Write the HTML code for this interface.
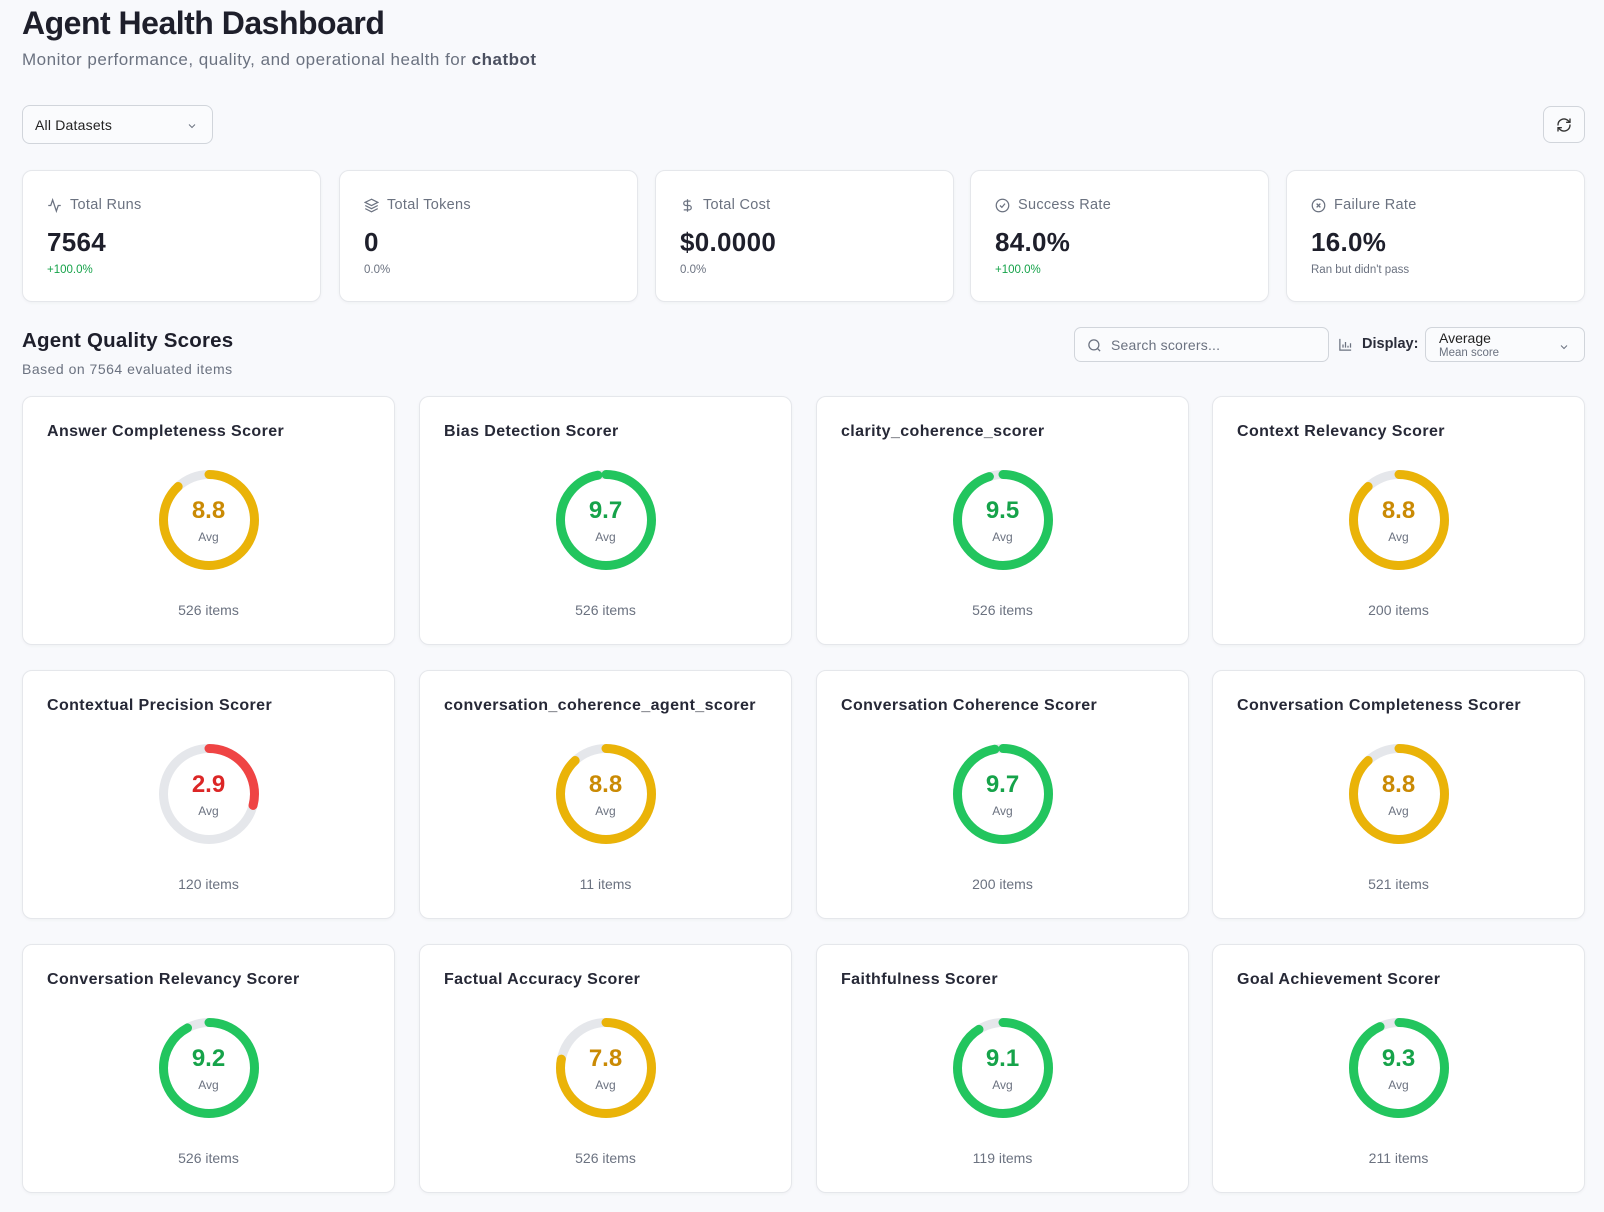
<!DOCTYPE html>
<html><head><meta charset="utf-8"><style>
*{box-sizing:border-box;margin:0;padding:0}
body{width:1604px;height:1212px;background:#f8f9fc;font-family:"Liberation Sans",sans-serif;color:#1f2130;position:relative;overflow:hidden}
.abs{position:absolute}
h1{position:absolute;left:22px;top:5px;font-size:32px;font-weight:700;letter-spacing:-0.5px;color:#1e1f2b}
.sub{position:absolute;left:22px;top:50px;font-size:17px;letter-spacing:0.5px;color:#6b7280}
.sub b{color:#4b5060;font-weight:600}
.dd{position:absolute;left:22px;top:105px;width:191px;height:39px;border:1px solid #d1d5db;border-radius:8px;background:#fafbfd;font-size:14px;padding:11px 12px;color:#222;letter-spacing:0.2px}
.dd svg{position:absolute;right:14px;top:14px}
.ref{position:absolute;left:1543px;top:106px;width:42px;height:37px;border:1px solid #d1d5db;border-radius:8px;background:#fafbfd}
.ref svg{position:absolute;left:12px;top:10px}
.stat{position:absolute;top:170px;width:299px;height:132px;background:#fff;border:1px solid #e5e7eb;border-radius:10px;box-shadow:0 1px 3px rgba(0,0,0,.04)}
.stat .l{position:absolute;left:24px;top:26px;font-size:14.5px;letter-spacing:0.3px;color:#6b7280;display:flex;align-items:center;gap:8px}
.stat .v{position:absolute;left:24px;top:56px;font-size:26px;font-weight:700;color:#1e1f2b;letter-spacing:0.3px}
.stat .s{position:absolute;left:24px;top:93px;font-size:11.5px;color:#6b7280}
.stat .g{color:#16a34a}
.st{position:absolute;left:22px;top:329px;font-size:20.5px;font-weight:700;color:#1e1f2b;letter-spacing:0.2px}
.st2{position:absolute;left:22px;top:361px;font-size:14px;color:#6b7280;letter-spacing:0.5px}
.search{position:absolute;left:1074px;top:327px;width:255px;height:35px;border:1px solid #d1d5db;border-radius:7px;background:#fafbfd;font-size:14px;color:#6b7280;padding:9px 0 0 36px;letter-spacing:0.2px}
.search svg{position:absolute;left:12px;top:10px}
.disp{position:absolute;left:1362px;top:336px;font-size:14.5px;font-weight:600;color:#2b2d3a}
.sel{position:absolute;left:1425px;top:327px;width:160px;height:35px;border:1px solid #d1d5db;border-radius:7px;background:#fafbfd;padding:2px 0 0 13px}
.sel .a{font-size:14px;color:#222}
.sel .m{font-size:11.5px;color:#6b7280;margin-top:1px}
.sel svg{position:absolute;right:14px;top:13px}
.card{position:absolute;width:373px;height:249px;background:#fff;border:1px solid #e5e7eb;border-radius:10px;box-shadow:0 1px 3px rgba(0,0,0,.04)}
.card .t{position:absolute;left:24px;top:26px;font-size:16px;font-weight:700;color:#262836;white-space:nowrap;letter-spacing:0.4px}
.card svg.r{position:absolute;left:136px;top:73px}
.card .n{position:absolute;left:0;width:100%;top:100px;text-align:center;font-size:24px;font-weight:700}
.card .avg{position:absolute;left:0;width:100%;top:133px;text-align:center;font-size:12px;color:#6b7280}
.card .i{position:absolute;left:0;width:100%;top:205px;text-align:center;font-size:14px;color:#6b7280}
</style></head><body>
<h1>Agent Health Dashboard</h1>
<div class="sub">Monitor performance, quality, and operational health for <b>chatbot</b></div>
<div class="dd">All Datasets<svg width="12" height="12" viewBox="0 0 24 24" fill="none" stroke="#6b7280" stroke-width="2"><path d="M6 9l6 6 6-6"/></svg></div>
<div class="ref"><svg width="16" height="16" viewBox="0 0 24 24" fill="none" stroke="#333" stroke-width="2" stroke-linecap="round" stroke-linejoin="round"><path d="M3 12a9 9 0 0 1 15-6.7L21 8"/><path d="M21 3v5h-5"/><path d="M21 12a9 9 0 0 1-15 6.7L3 16"/><path d="M8 16H3v5"/></svg></div>

<div class="stat" style="left:22px"><div class="l"><svg width="15" height="15" viewBox="0 0 24 24" fill="none" stroke="#6b7280" stroke-width="2"><path d="M22 12h-4l-3 9L9 3l-3 9H2"/></svg>Total Runs</div><div class="v">7564</div><div class="s g">+100.0%</div></div>
<div class="stat" style="left:339px"><div class="l"><svg width="15" height="15" viewBox="0 0 24 24" fill="none" stroke="#6b7280" stroke-width="2"><path d="M12 2 2 7l10 5 10-5-10-5z"/><path d="M2 17l10 5 10-5"/><path d="M2 12l10 5 10-5"/></svg>Total Tokens</div><div class="v">0</div><div class="s">0.0%</div></div>
<div class="stat" style="left:655px"><div class="l"><svg width="15" height="15" viewBox="0 0 24 24" fill="none" stroke="#6b7280" stroke-width="2"><path d="M12 2v20M17 5H9.5a3.5 3.5 0 0 0 0 7h5a3.5 3.5 0 0 1 0 7H6"/></svg>Total Cost</div><div class="v">$0.0000</div><div class="s">0.0%</div></div>
<div class="stat" style="left:970px"><div class="l"><svg width="15" height="15" viewBox="0 0 24 24" fill="none" stroke="#6b7280" stroke-width="2"><circle cx="12" cy="12" r="10"/><path d="M8 12l3 3 5-6"/></svg>Success Rate</div><div class="v">84.0%</div><div class="s g">+100.0%</div></div>
<div class="stat" style="left:1286px"><div class="l"><svg width="15" height="15" viewBox="0 0 24 24" fill="none" stroke="#6b7280" stroke-width="2"><circle cx="12" cy="12" r="10"/><path d="M15 9l-6 6M9 9l6 6"/></svg>Failure Rate</div><div class="v">16.0%</div><div class="s">Ran but didn't pass</div></div>

<div class="st">Agent Quality Scores</div>
<div class="st2">Based on 7564 evaluated items</div>
<div class="search"><svg width="15" height="15" viewBox="0 0 24 24" fill="none" stroke="#6b7280" stroke-width="2"><circle cx="11" cy="11" r="8"/><path d="M21 21l-4.3-4.3"/></svg>Search scorers...</div>
<svg class="abs" style="left:1338px;top:337px" width="15" height="15" viewBox="0 0 24 24" fill="none" stroke="#6b7280" stroke-width="2"><path d="M3 3v18h18M8 17v-5M12 17V8M16 17v-3M20 17V10"/></svg>
<div class="disp">Display:</div>
<div class="sel"><div class="a">Average</div><div class="m">Mean score</div><svg width="12" height="12" viewBox="0 0 24 24" fill="none" stroke="#6b7280" stroke-width="2"><path d="M6 9l6 6 6-6"/></svg></div>

<div id="cards"></div>
<script>
const d=[["Answer Completeness Scorer",8.8,526],["Bias Detection Scorer",9.7,526],["clarity_coherence_scorer",9.5,526],["Context Relevancy Scorer",8.8,200],["Contextual Precision Scorer",2.9,120],["conversation_coherence_agent_scorer",8.8,11],["Conversation Coherence Scorer",9.7,200],["Conversation Completeness Scorer",8.8,521],["Conversation Relevancy Scorer",9.2,526],["Factual Accuracy Scorer",7.8,526],["Faithfulness Scorer",9.1,119],["Goal Achievement Scorer",9.3,211]];
const xs=[22,419,816,1212],ys=[396,670,944];let h="";
const C=2*Math.PI*45.5;
d.forEach((c,k)=>{const v=c[1];let s,t;if(v>=9){s="#22c55e";t="#16a34a"}else if(v>=5){s="#eab308";t="#ca8a04"}else{s="#ef4444";t="#dc2626"}
const L=v/10*C;
h+=`<div class="card" style="left:${xs[k%4]}px;top:${ys[Math.floor(k/4)]}px"><div class="t">${c[0]}</div><svg class="r" width="100" height="100" viewBox="0 0 100 100"><circle cx="50" cy="50" r="45.5" fill="none" stroke="#e5e7eb" stroke-width="9"/><circle cx="50" cy="50" r="45.5" fill="none" stroke="${s}" stroke-width="9" stroke-linecap="round" stroke-dasharray="${L} ${C}" transform="rotate(-90 50 50)"/></svg><div class="n" style="color:${t}">${v.toFixed(1)}</div><div class="avg">Avg</div><div class="i">${c[2]} items</div></div>`});
document.getElementById("cards").innerHTML=h;
</script>
</body></html>
